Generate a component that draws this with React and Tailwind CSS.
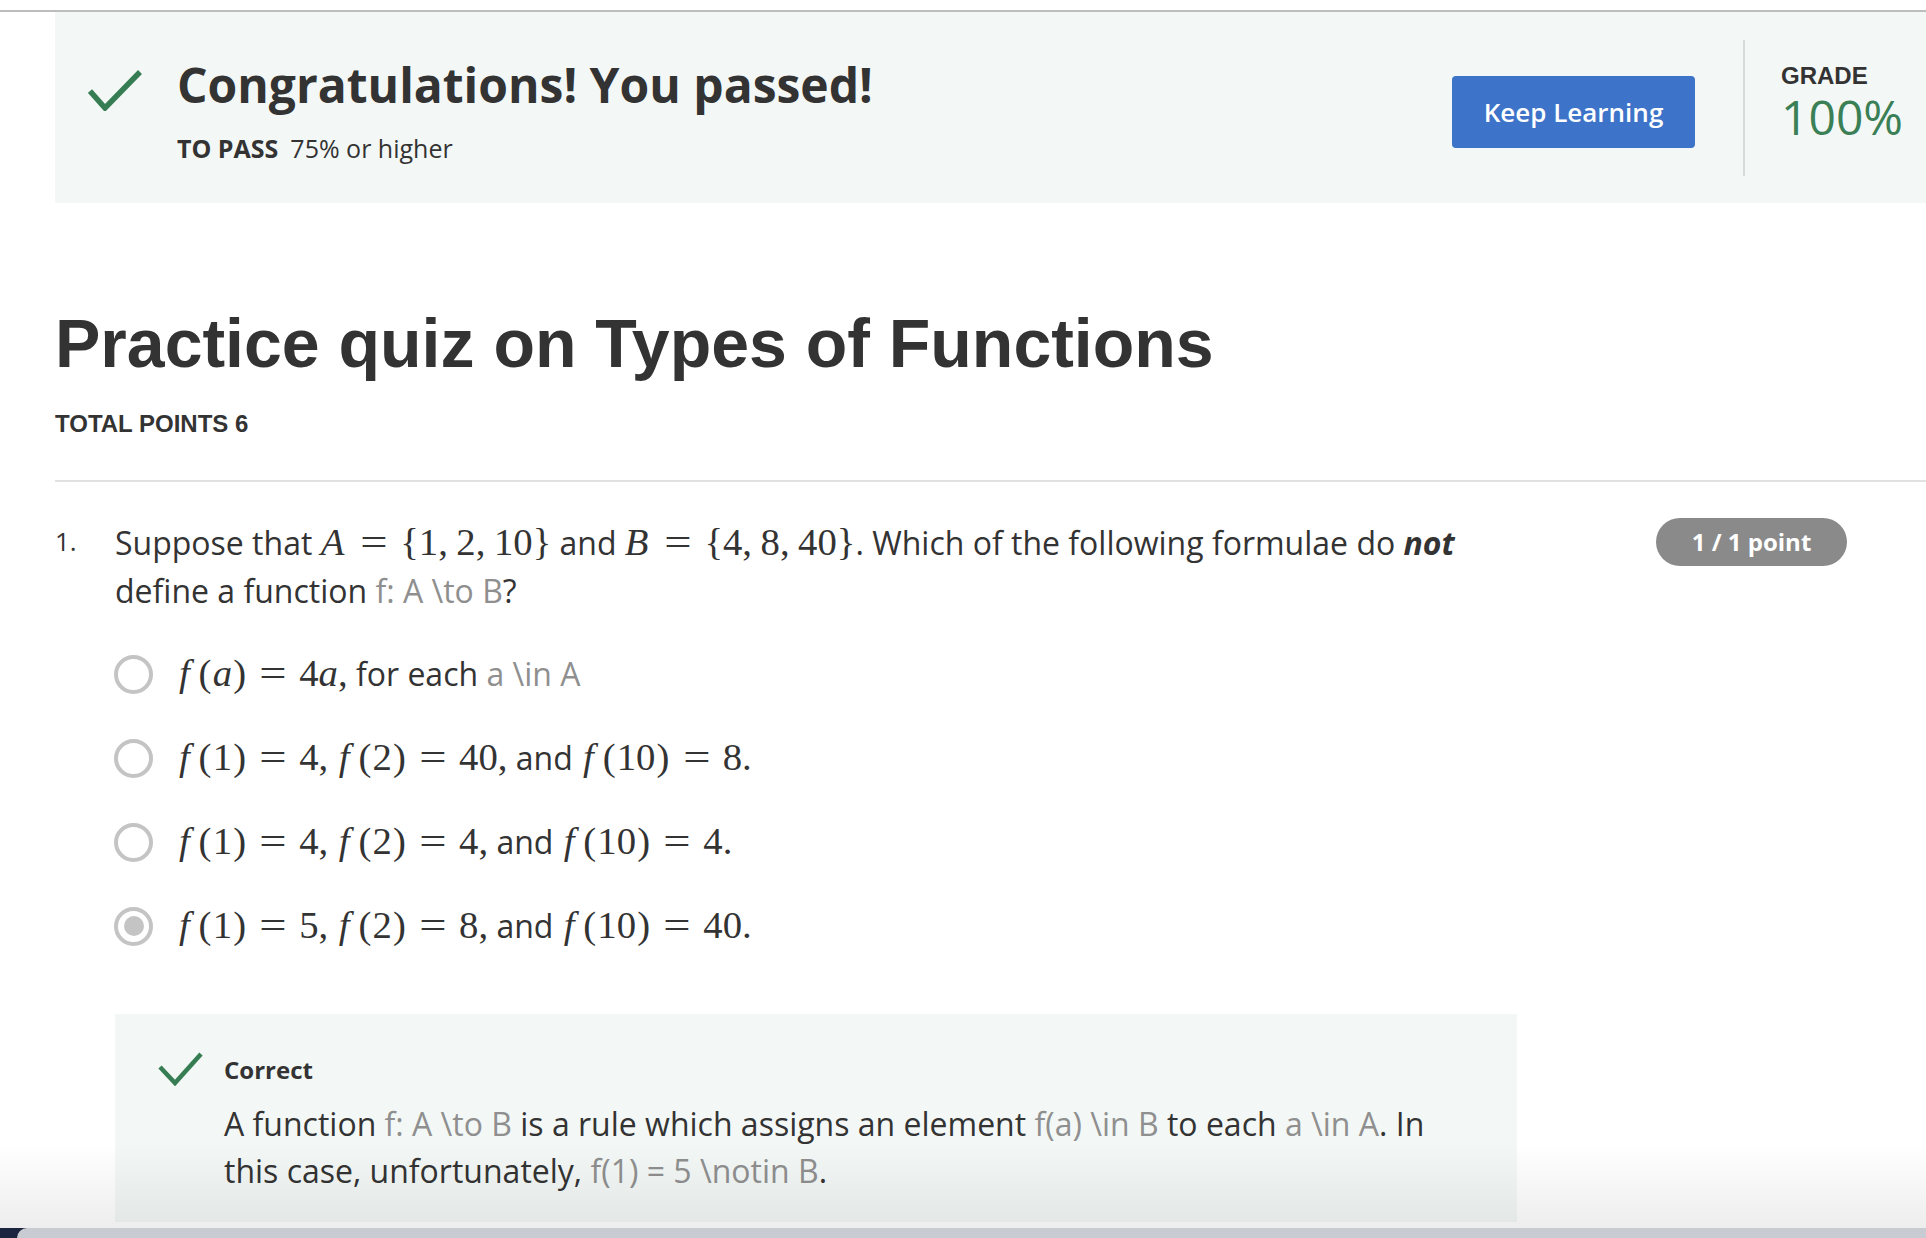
const serif = "font-['Liberation_Serif','Times_New_Roman',serif]";

function BigCheck() {
  return (
    <svg viewBox="0 0 54 42" className="mt-[57px] ml-[33px] h-[42px] w-[54px] shrink-0" fill="none">
      <path d="M2 22 L17 39 L52 3" stroke="#377d53" strokeWidth="5.5" />
    </svg>
  );
}

function SmallCheck() {
  return (
    <svg viewBox="0 0 45 34" className="h-[34px] w-[45px] shrink-0" fill="none">
      <path d="M2 15 L17 31 L43 2" stroke="#377d53" strokeWidth="4.5" />
    </svg>
  );
}

// KaTeX-ish inline math, approximated with Liberation Serif + manual spacing
function M({ children }) {
  return <span className={serif + " text-[1.21em] leading-none"}>{children}</span>;
}

function Eq() {
  return <span className="mx-[0.39em] inline-block scale-x-[1.25]">=</span>;
}

function Cm() {
  return <span className="mr-[0.22em]">,</span>;
}

function F() {
  return <i className="pl-[0.05em] pr-[0.2em]">f</i>;
}

function P({ children }) {
  return (
    <>
      <span className="px-[0.03em]">(</span>
      {children}
      <span className="px-[0.03em]">)</span>
    </>
  );
}

function Tex({ children }) {
  return <span className="text-[#8f8f8f]">{children}</span>;
}

function Radio({ checked }) {
  return (
    <span className="flex h-[39px] w-[39px] shrink-0 items-center justify-center rounded-full border-[4px] border-[#c4c4c4] bg-white">
      {checked && <span className="h-[20px] w-[20px] rounded-full bg-[#c4c4c4]" />}
    </span>
  );
}

function Option({ checked, children }) {
  return (
    <label className="flex h-[84px] items-center gap-[24px]">
      <Radio checked={checked} />
      <span className="text-[32px] leading-[48px]">{children}</span>
    </label>
  );
}

export default function App() {
  return (
    <div className="relative h-[1238px] w-full overflow-hidden bg-white font-['Open_Sans',sans-serif] text-[#333]">
      <div className="h-[10px]" />
      <div className="h-[2px] bg-[#bdbdbd]" />

      <section className="ml-[55px] flex h-[191px] items-start bg-[#f3f8f6]">
        <BigCheck />
        <div className="ml-[35px] mt-[49px]">
          <h2 className="text-[48px] font-bold leading-none">Congratulations! You passed!</h2>
          <p className="mt-[27px] text-[25px] leading-none">
            <span className="mr-[12px] font-bold">TO PASS</span>75% or higher
          </p>
        </div>
        <button
          type="button"
          className="ml-auto mt-[64px] h-[72px] w-[243px] rounded-[4px] bg-[#3d73c8] text-[26px] font-semibold text-white"
        >
          Keep Learning
        </button>
        <div className="ml-[48px] mt-[28px] h-[136px] w-[2px] bg-[#dadada]" />
        <div className="ml-[36px] mt-[52px] w-[145px]">
          <div className="font-['Liberation_Sans',Arial,sans-serif] text-[24px] font-bold leading-none">GRADE</div>
          <div className="mt-[5px] text-[48px] leading-none text-[#3a7f55]">100%</div>
        </div>
      </section>

      <main className="pl-[55px]">
        <h1 className="mt-[106px] font-['Liberation_Sans',Arial,sans-serif] text-[68px] font-bold leading-none">
          Practice quiz on Types of Functions
        </h1>
        <p className="mt-[35px] font-['Liberation_Sans',Arial,sans-serif] text-[24px] font-bold leading-none">
          TOTAL POINTS 6
        </p>
        <div className="mt-[44px] h-[2px] bg-[#e1e1e1]" />

        <div className="mt-[37px] flex items-start">
          <span className="mt-[9px] w-[60px] shrink-0 text-[26px] leading-none">1.</span>
          <div className="w-[1390px] text-[32px] leading-[48px]">
            Suppose that{" "}
            <M>
              <i className="pr-[0.1em]">A</i>
              <Eq />
              {"{"}1<Cm />2<Cm />10{"}"}
            </M>{" "}
            and{" "}
            <M>
              <i className="pr-[0.1em]">B</i>
              <Eq />
              {"{"}4<Cm />8<Cm />40{"}"}
            </M>
            . Which of the following formulae do <b className="italic">not</b> define a function{" "}
            <Tex>{"f: A \\to B"}</Tex>?
          </div>
          <span className="-mt-[1px] ml-auto mr-[79px] flex h-[48px] w-[191px] shrink-0 items-center justify-center rounded-full bg-[#8a8a8a] text-[24px] font-bold text-white">
            1 / 1 point
          </span>
        </div>

        <div className="mt-[17px] pl-[59px]">
          <Option>
            <M>
              <F />
              <P>
                <i>a</i>
              </P>
              <Eq />4<i>a</i>,
            </M>{" "}
            for each <Tex>{"a \\in A"}</Tex>
          </Option>
          <Option>
            <M>
              <F />
              <P>1</P>
              <Eq />4<Cm />
              <F />
              <P>2</P>
              <Eq />40,
            </M>{" "}
            and{" "}
            <M>
              <F />
              <P>10</P>
              <Eq />8.
            </M>
          </Option>
          <Option>
            <M>
              <F />
              <P>1</P>
              <Eq />4<Cm />
              <F />
              <P>2</P>
              <Eq />4,
            </M>{" "}
            and{" "}
            <M>
              <F />
              <P>10</P>
              <Eq />4.
            </M>
          </Option>
          <Option checked>
            <M>
              <F />
              <P>1</P>
              <Eq />5<Cm />
              <F />
              <P>2</P>
              <Eq />8,
            </M>{" "}
            and{" "}
            <M>
              <F />
              <P>10</P>
              <Eq />40.
            </M>
          </Option>
        </div>

        <div className="ml-[60px] mt-[46px] flex w-[1402px] items-start bg-[#f3f8f6] pb-[28px] pl-[43px] pt-[38px]">
          <SmallCheck />
          <div className="ml-[21px]">
            <p className="text-[24px] font-bold leading-[36px]">Correct</p>
            <p className="mt-[12px] w-[1240px] text-[32px] leading-[47px]">
              A function <Tex>{"f: A \\to B"}</Tex> is a rule which assigns an element{" "}
              <Tex>{"f(a) \\in B"}</Tex> to each <Tex>{"a \\in A"}</Tex>. In this case, unfortunately,{" "}
              <Tex>{"f(1) = 5 \\notin B"}</Tex>.
            </p>
          </div>
        </div>
      </main>

      {/* window shadow and dock strip at the bottom edge */}
      <div className="pointer-events-none absolute inset-x-0 bottom-[10px] h-[85px] bg-linear-to-b from-transparent to-black/[0.07]" />
      <div className="absolute inset-x-0 bottom-0 h-[10px] bg-[#1c2540]">
        <div className="ml-[17px] h-full rounded-tl-[10px] bg-[#c9cbd3]" />
      </div>
    </div>
  );
}
